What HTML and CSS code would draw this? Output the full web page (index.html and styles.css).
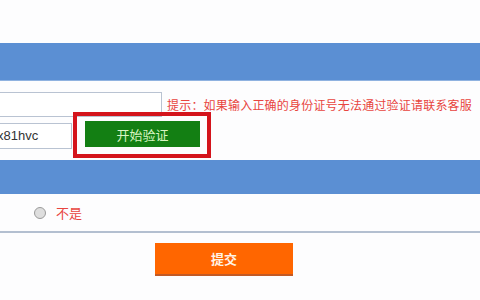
FILE: index.html
```html
<!DOCTYPE html>
<html lang="zh-CN">

<head>
    <meta charset="UTF-8">
    <title>身份验证</title>
    <link rel="stylesheet" href="styles.css">
</head>

<body>
    <div class="top-space"></div>

    <div class="bar bar-main"></div>

    <div class="form">
        <div class="row row-id">
            <input type="text" class="field field-id" value="">
            <span class="hint">提示：如果输入正确的身份证号无法通过验证请联系客服</span>
        </div>

        <div class="row row-code">
            <input type="text" class="field field-code" value="x81hvc">
            <div class="highlight">
                <button class="btn-verify">开始验证</button>
            </div>
        </div>
    </div>

    <div class="bar bar-sub"></div>

    <div class="choice">
        <span class="radio"></span>
        <span class="choice-label">不是</span>
    </div>

    <div class="actions">
        <button class="btn-submit">提交</button>
    </div>
</body>

</html>
```

FILE: styles.css
```css
body {
    margin: 0;
    background: #fdfdfe;
    font-family: "Noto Sans CJK SC", "Liberation Sans", sans-serif;
    color: #333;
}

.top-space {
    height: 43px;
}

.bar {
    background: #5b8fd3;
}

.bar-main {
    height: 37px;
    border-bottom: 1px solid #8fb2e0;
}

.bar-sub {
    height: 34px;
    margin-top: 2px;
}

.form {
    padding-top: 11px;
}

.row {
    display: flex;
    align-items: center;
}

.field {
    box-sizing: border-box;
    height: 26px;
    border: 1px solid #b9c3d2;
    border-left: none;
    background: #fff;
    font-family: "Liberation Sans", sans-serif;
    font-size: 13px;
    color: #333;
    outline: none;
}

.field-id {
    width: 162px;
    height: 25px;
}

.field-code {
    width: 72px;
    padding: 0;
    text-indent: -3px;
    margin-top: 1px;
}

.hint {
    margin-left: 5px;
    font-size: 12px;
    letter-spacing: 0.2px;
    color: #e8453f;
    white-space: nowrap;
}

.row-code {
    margin-top: -5px;
}

.highlight {
    margin-left: 1px;
    border: 4px solid #d4141c;
    padding: 5px 7px 7px 8px;
}

.btn-verify {
    display: block;
    width: 115px;
    height: 26px;
    border: none;
    background: #137f13;
    color: #d8f5c2;
    font-family: "Noto Sans CJK SC", sans-serif;
    font-size: 13px;
    padding: 0;
}

.choice {
    height: 37px;
    display: flex;
    align-items: center;
    padding-left: 34px;
    border-bottom: 2px solid #b3bfd0;
}

.radio {
    box-sizing: border-box;
    width: 12px;
    height: 12px;
    border-radius: 50%;
    border: 1px solid #9a9a9a;
    background: #dedede;
    margin-top: 1px;
}

.choice-label {
    margin-left: 10px;
    font-size: 13px;
    color: #e8453f;
}

.actions {
    padding: 10px 0 0 155px;
}

.btn-submit {
    width: 138px;
    height: 33px;
    border: none;
    border-bottom: 2px solid #c25a25;
    background: #ff6600;
    color: #fff3e6;
    font-family: "Noto Sans CJK SC", sans-serif;
    font-size: 13px;
    font-weight: bold;
    padding: 0;
}
```
